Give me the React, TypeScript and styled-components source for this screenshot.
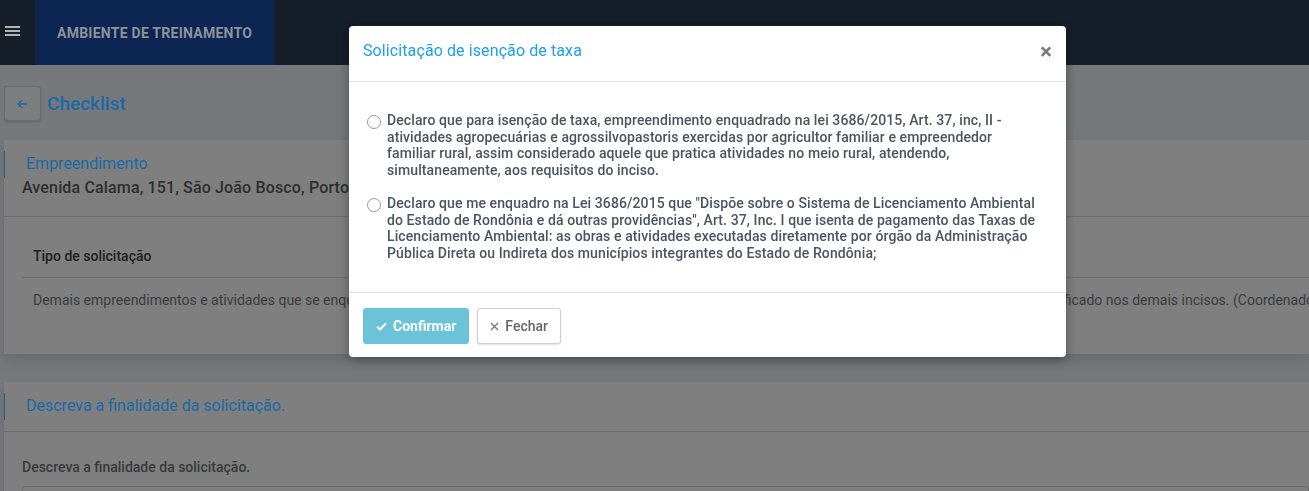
import React from "react";
import styled, { createGlobalStyle } from "styled-components";

const GlobalStyle = createGlobalStyle`
  html, body {
    margin: 0;
    padding: 0;
    background: #77787b;
    font-family: Roboto, "Liberation Sans", Arial, sans-serif;
    overflow: hidden;
  }
  * { box-sizing: border-box; }
`;

/* page behind the dialog, painted as it shows through the dim backdrop */
const Page = styled.div`
  width: 1309px;
  height: 491px;
  background: #77787b;
  overflow: hidden;
`;

const TopBar = styled.header`
  height: 65px;
  background: #151e29;
  display: flex;
  align-items: stretch;
`;

const MenuButton = styled.div`
  width: 35px;
  padding: 26px 0 0 5px;
  display: flex;
  flex-direction: column;
  gap: 2px;
`;

const MenuLine = styled.span`
  display: block;
  width: 15px;
  height: 2px;
  background: #b3b4b6;
`;

const Brand = styled.div`
  background: #0c2553;
  color: #8e9299;
  font-weight: 700;
  font-size: 14px;
  letter-spacing: 0.25px;
  padding: 0 22px;
  display: flex;
  align-items: center;
`;

const Content = styled.main`
  padding: 21px 0 0 4px;
`;

const TitleRow = styled.div`
  display: flex;
  align-items: center;
  gap: 6px;
  height: 35px;
`;

const BackButton = styled.div`
  width: 37px;
  height: 35px;
  border: 1px solid #6a6b6d;
  border-radius: 3px;
  background: #7c7d80;
  display: flex;
  align-items: center;
  justify-content: center;
  box-shadow: 0 1px 2px rgba(0, 0, 0, 0.15);
`;

const PageTitle = styled.h1`
  margin: 0;
  font-size: 19px;
  font-weight: 500;
  color: #1a6aa8;
`;

const Card = styled.section<{ $top: number }>`
  margin-top: ${(p) => p.$top}px;
  background: #7f7f7f;
  box-shadow: 0 6px 12px rgba(0, 0, 0, 0.12);
`;

const CardHeader = styled.div`
  padding: 11px 0 0 0;
  border-bottom: 1px solid #6e6e6e;
`;

const CardTitle = styled.h2`
  margin: 0;
  height: 27px;
  line-height: 25px;
  border-left: 1px solid #1a5f9a;
  padding-left: 21px;
  font-size: 16px;
  font-weight: 400;
  color: #1a6aa8;
`;

const Address = styled.div`
  padding: 0 0 18px 18px;
  font-size: 16px;
  font-weight: 500;
  line-height: 20px;
  letter-spacing: 0.15px;
  color: #2d2e30;
  white-space: nowrap;
`;

const HeaderSpacer = styled.div`
  height: 11px;
`;

const CardBody = styled.div<{ $pad: string }>`
  padding: ${(p) => p.$pad};
`;

const Table = styled.div`
  display: flex;
  flex-direction: column;
  overflow: hidden;
`;

const TableHead = styled.div`
  height: 44px;
  display: flex;
  align-items: center;
  padding-left: 11px;
  border-bottom: 1px solid #6e6e6e;
  font-size: 14px;
  font-weight: 500;
  color: #1e1f20;
`;

const TableCell = styled.div`
  height: 44px;
  display: flex;
  align-items: center;
  padding-left: 11px;
  font-size: 14px;
  color: #3b3c3e;
  white-space: nowrap;
`;

const FieldLabel = styled.label`
  display: block;
  font-size: 14px;
  font-weight: 500;
  color: #393a3c;
  line-height: 18px;
  margin-bottom: 10px;
`;

const FieldBox = styled.div`
  height: 40px;
  border: 1px solid #6a6a6a;
  border-radius: 3px;
  background: #7f7f7f;
`;

/* dialog */
const Dialog = styled.div`
  position: fixed;
  top: 26px;
  left: 349px;
  width: 717px;
  background: #fff;
  border-radius: 4px;
  box-shadow: 0 3px 12px rgba(0, 0, 0, 0.35);
  overflow: hidden;
`;

const DialogHeader = styled.div`
  height: 56px;
  padding: 15px 14px 0;
  display: flex;
  align-items: flex-start;
  justify-content: space-between;
  border-bottom: 1px solid #e2e4e7;
`;

const DialogTitle = styled.h3`
  margin: 0;
  font-size: 16px;
  line-height: 20px;
  font-weight: 400;
  letter-spacing: 0.1px;
  color: #1c9ef1;
`;

const CloseButton = styled.span`
  font-size: 22px;
  font-weight: 700;
  color: #7a7a7a;
  line-height: 22px;
`;

const DialogBody = styled.div`
  padding: 30px 20px 31px 18px;
  display: flex;
  flex-direction: column;
  gap: 17px;
`;

const Option = styled.label`
  display: flex;
  align-items: flex-start;
  gap: 6px;
`;

const Radio = styled.span`
  flex: none;
  width: 14px;
  height: 14px;
  margin-top: 3px;
  border: 1px solid #9a9a9a;
  border-radius: 50%;
  background: #fff;
`;

const OptionText = styled.span`
  display: flex;
  flex-direction: column;
  font-size: 14px;
  font-weight: 500;
  line-height: 16.5px;
  letter-spacing: 0.1px;
  color: #4a5561;
`;

const OptionLine = styled.span`
  white-space: nowrap;
`;

const DialogFooter = styled.div`
  border-top: 1px solid #e2e4e7;
  padding: 15px 14px 13px;
  display: flex;
  gap: 8px;
`;

const Button = styled.button<{ $primary?: boolean }>`
  height: 36px;
  padding: 0 12px;
  border-radius: 3px;
  display: flex;
  align-items: center;
  gap: 6px;
  font-family: inherit;
  font-size: 14px;
  font-weight: ${(p) => (p.$primary ? 700 : 500)};
  color: ${(p) => (p.$primary ? "#fff" : "#666")};
  background: ${(p) => (p.$primary ? "#6ac3d6" : "#fff")};
  border: 1px solid ${(p) => (p.$primary ? "#6ac3d6" : "#cfcfcf")};
  box-shadow: ${(p) => (p.$primary ? "none" : "0 1px 2px rgba(0,0,0,0.12)")};
`;

const options = [
  [
    "Declaro que para isenção de taxa, empreendimento enquadrado na lei 3686/2015, Art. 37, inc, II -",
    "atividades agropecuárias e agrossilvopastoris exercidas por agricultor familiar e empreendedor",
    "familiar rural, assim considerado aquele que pratica atividades no meio rural, atendendo,",
    "simultaneamente, aos requisitos do inciso.",
  ],
  [
    'Declaro que me enquadro na Lei 3686/2015 que "Dispõe sobre o Sistema de Licenciamento Ambiental',
    'do Estado de Rondônia e dá outras providências", Art. 37, Inc. I que isenta de pagamento das Taxas de',
    "Licenciamento Ambiental: as obras e atividades executadas diretamente por órgão da Administração",
    "Pública Direta ou Indireta dos municípios integrantes do Estado de Rondônia;",
  ],
];

export default function App() {
  return (
    <>
      <GlobalStyle />
      <Page>
        <TopBar>
          <MenuButton>
            <MenuLine />
            <MenuLine />
            <MenuLine />
          </MenuButton>
          <Brand>AMBIENTE DE TREINAMENTO</Brand>
        </TopBar>

        <Content>
          <TitleRow>
            <BackButton>
              <svg width="11" height="10" viewBox="0 0 11 10" fill="none" stroke="#1a6aa8" strokeWidth="1.4">
                <path d="M10 5H1.5M5 1.2 1.2 5 5 8.8" />
              </svg>
            </BackButton>
            <PageTitle>Checklist</PageTitle>
          </TitleRow>

          <Card $top={19}>
            <CardHeader>
              <CardTitle>Empreendimento</CardTitle>
              <Address>Avenida Calama, 151, São João Bosco, Porto Velho - RO</Address>
            </CardHeader>
            <CardBody $pad="17px 0 32px 18px">
              <Table>
                <TableHead>Tipo de solicitação</TableHead>
                <TableCell>
                  Demais empreendimentos e atividades que se enquadram nesta tipologia, conforme o Anexo Único da Lei nº 3686/2015, cujo enquadramento ainda não esteja especificado nos demais incisos. (Coordenadoria)
                </TableCell>
              </Table>
            </CardBody>
          </Card>

          <Card $top={28}>
            <CardHeader>
              <CardTitle>Descreva a finalidade da solicitação.</CardTitle>
              <HeaderSpacer />
            </CardHeader>
            <CardBody $pad="26px 0 20px 18px">
              <FieldLabel>Descreva a finalidade da solicitação.</FieldLabel>
              <FieldBox />
            </CardBody>
          </Card>
        </Content>
      </Page>

      <Dialog>
        <DialogHeader>
          <DialogTitle>Solicitação de isenção de taxa</DialogTitle>
          <CloseButton>×</CloseButton>
        </DialogHeader>
        <DialogBody>
          {options.map((lines) => (
            <Option key={lines[0]}>
              <Radio />
              <OptionText>
                {lines.map((line) => (
                  <OptionLine key={line}>{line}</OptionLine>
                ))}
              </OptionText>
            </Option>
          ))}
        </DialogBody>
        <DialogFooter>
          <Button $primary>
            <svg width="11" height="9" viewBox="0 0 11 9" fill="none" stroke="#fff" strokeWidth="2">
              <path d="M1 4.6 4 7.5 10 1.2" />
            </svg>
            Confirmar
          </Button>
          <Button>
            <svg width="9" height="9" viewBox="0 0 9 9" fill="none" stroke="#777" strokeWidth="1.3">
              <path d="M1 1 8 8M8 1 1 8" />
            </svg>
            Fechar
          </Button>
        </DialogFooter>
      </Dialog>
    </>
  );
}
